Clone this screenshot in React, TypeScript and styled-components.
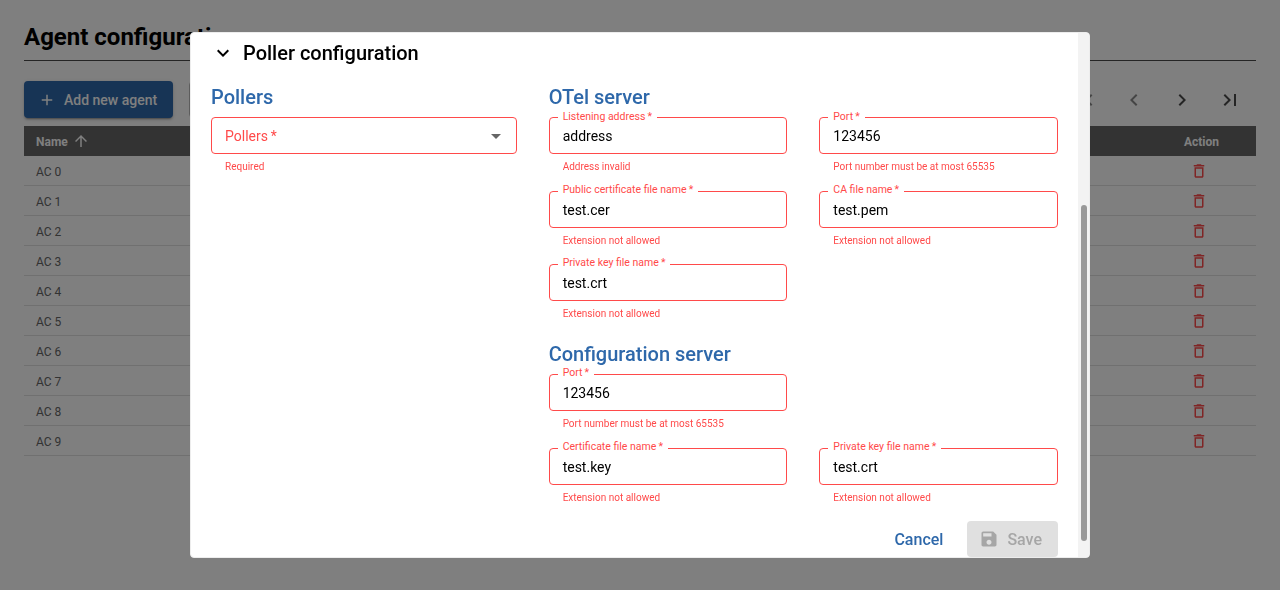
import React from "react";
import styled, { createGlobalStyle } from "styled-components";

const GlobalStyle = createGlobalStyle`
  * { box-sizing: border-box; }
  body { margin: 0; background: #fff; font-family: Roboto, "Liberation Sans", sans-serif; color: #000; }
  h1, h2, h3, p { margin: 0; }
`;

const paths = {
  add: "M19 13h-6v6h-2v-6H5v-2h6V5h2v6h6z",
  arrowUp: "m4 12 1.41 1.41L11 7.83V20h2V7.83l5.58 5.59L20 12l-8-8z",
  first: "M18.41 16.59 13.82 12l4.59-4.59L17 6l-6 6 6 6zM6 6h2v12H6z",
  left: "M15.41 7.41 14 6l-6 6 6 6 1.41-1.41L10.83 12z",
  right: "M10 6 8.59 7.41 13.17 12l-4.58 4.59L10 18l6-6z",
  last: "M5.59 7.41 10.18 12l-4.59 4.59L7 18l6-6-6-6zM16 6h2v12h-2z",
  expand: "M16.59 8.59 12 13.17 7.41 8.59 6 10l6 6 6-6z",
  dropdown: "m7 10 5 5 5-5z",
  trash:
    "M6 19c0 1.1.9 2 2 2h8c1.1 0 2-.9 2-2V7H6zM8 9h8v10H8zm7.5-5-1-1h-5l-1 1H5v2h14V4z",
  save: "M17 3H5c-1.11 0-2 .9-2 2v14c0 1.1.89 2 2 2h14c1.1 0 2-.9 2-2V7zm-5 16c-1.66 0-3-1.34-3-3s1.34-3 3-3 3 1.34 3 3-1.34 3-3 3m3-10H5V5h10z",
};

const Svg = styled.svg`
  display: block;
  flex: none;
  fill: currentColor;
`;

const Icon = ({ name, size = 24 }: { name: keyof typeof paths; size?: number }) => (
  <Svg width={size} height={size} viewBox="0 0 24 24" aria-hidden="true">
    <path d={paths[name]} />
  </Svg>
);

const Page = styled.main`
  height: 590px;
  padding: 14px 24px 0;
  overflow: hidden;
`;

const PageTitle = styled.h1`
  height: 47px;
  border-bottom: 1px solid #4a4a4a;
  font-size: 24px;
  font-weight: 700;
  line-height: 46px;
`;

const Toolbar = styled.div`
  display: flex;
  align-items: center;
  height: 65px;
  padding-top: 12px;
`;

const AddButton = styled.button`
  display: flex;
  align-items: center;
  gap: 8px;
  width: 149px;
  height: 37px;
  padding: 0 0 0 14px;
  border: 0;
  border-radius: 4px;
  background: #2e68aa;
  color: #fff;
  font: 500 14px Roboto, sans-serif;
  white-space: nowrap;
  box-shadow: 0 3px 1px -2px rgba(0, 0, 0, 0.2), 0 2px 2px rgba(0, 0, 0, 0.14),
    0 1px 5px rgba(0, 0, 0, 0.12);
`;

const Search = styled.div`
  width: 250px;
  height: 37px;
  margin-left: 16px;
  border: 1px solid #b8b8b8;
  border-radius: 4px;
`;

const Pagination = styled.div`
  display: flex;
  gap: 24px;
  margin-left: auto;
  padding-right: 14px;
`;

const PageStep = styled.span<{ $disabled?: boolean }>`
  color: ${(p) => (p.$disabled ? "#8a8a8a" : "#4a4a4a")};
`;

const TableRow = styled.div<{ $head?: boolean }>`
  display: flex;
  align-items: center;
  justify-content: space-between;
  height: 30px;
  padding: ${(p) => (p.$head ? "0 37px 0 12px" : "0 48px 0 12px")};
  background: ${(p) => (p.$head ? "#666" : "#fff")};
  color: ${(p) => (p.$head ? "#fff" : "#666")};
  border-bottom: ${(p) => (p.$head ? "0" : "1px solid #e0e0e0")};
  font-size: 12px;
  font-weight: ${(p) => (p.$head ? 700 : 400)};
`;

const CellText = styled.span`
  padding-top: 2px;
`;

const SortCell = styled.span`
  display: flex;
  align-items: center;
  gap: 4px;
`;

const Danger = styled.span`
  color: #ff4a4a;
`;

const Backdrop = styled.div`
  position: fixed;
  inset: 0;
  display: flex;
  justify-content: center;
  align-items: center;
  background: rgba(0, 0, 0, 0.5);
`;

const Dialog = styled.div`
  display: flex;
  width: 900px;
  height: 526px;
  border: 1px solid #ededed;
  border-radius: 4px;
  background: #fff;
  overflow: hidden;
`;

const DialogBody = styled.div`
  flex: 1;
  padding: 8px 20px 0;
`;

const ScrollTrack = styled.div`
  width: 11px;
  padding: 172px 2px 0 3px;
  background: #f3f3f3;
`;

const ScrollThumb = styled.div`
  width: 6px;
  height: 336px;
  border-radius: 3px;
  background: #999;
`;

const SectionToggle = styled.div`
  display: flex;
  align-items: center;
  gap: 8px;
  height: 24px;
  margin-bottom: 16px;
`;

const SectionTitle = styled.h2`
  font-size: 20px;
  font-weight: 500;
  line-height: 24px;
`;

const Columns = styled.div`
  display: grid;
  grid-template-columns: 3fr 5fr;
  column-gap: 32px;
`;

const GroupTitle = styled.h3`
  height: 36.45px;
  color: #2e68aa;
  font-size: 20px;
  font-weight: 500;
  line-height: 32px;
`;

const FieldGrid = styled.div`
  display: grid;
  grid-template-columns: 1fr 1fr;
  grid-auto-rows: 73.45px;
  column-gap: 32px;
`;

const FieldBox = styled.div`
  position: relative;
  display: flex;
  align-items: center;
  justify-content: space-between;
  height: 37px;
  padding: 0.8px 8px 0 13px;
  border: 1px solid #ff4a4a;
  border-radius: 4px;
  font-size: 14px;
`;

const FloatingLabel = styled.label`
  position: absolute;
  top: -9.9px;
  left: 8px;
  padding: 0 5px;
  background: #fff;
  color: #ff4a4a;
  font-size: 10.5px;
  line-height: 15px;
  white-space: nowrap;
`;

const Placeholder = styled.span`
  color: #ff4a4a;
`;

const Caret = styled.span`
  color: #666;
`;

const Helper = styled.p`
  margin: 4px 14px 0;
  color: #ff4a4a;
  font-size: 10px;
  line-height: 17px;
  white-space: nowrap;
`;

const Footer = styled.div`
  display: flex;
  justify-content: flex-end;
  gap: 24px;
`;

const TextButton = styled.button`
  height: 36px;
  padding: 0;
  border: 0;
  background: none;
  color: #2e68aa;
  font: 500 16px Roboto, sans-serif;
`;

const SaveButton = styled(TextButton)`
  display: flex;
  align-items: center;
  gap: 8px;
  width: 90.6px;
  padding-left: 12px;
  border-radius: 4px;
  background: #e0e0e0;
  color: #a6a6a6;
`;

interface FieldProps {
  label: string;
  value: string;
  error: string;
}

const Field = ({ label, value, error }: FieldProps) => (
  <div>
    <FieldBox>
      <FloatingLabel>{label}{"\u2009*"}</FloatingLabel>
      <span>{value}</span>
    </FieldBox>
    <Helper>{error}</Helper>
  </div>
);

const portError = "Port number must be at most 65535";
const extError = "Extension not allowed";

export default function App() {
  return (
    <>
      <GlobalStyle />
      <Page>
        <PageTitle>Agent configurations</PageTitle>
        <Toolbar>
          <AddButton>
            <Icon name="add" size={18} />
            Add new agent
          </AddButton>
          <Search />
          <Pagination>
            <PageStep $disabled><Icon name="first" /></PageStep>
            <PageStep $disabled><Icon name="left" /></PageStep>
            <PageStep><Icon name="right" /></PageStep>
            <PageStep><Icon name="last" /></PageStep>
          </Pagination>
        </Toolbar>
        <TableRow $head>
          <SortCell>
            <CellText>Name</CellText>
            <Icon name="arrowUp" size={18} />
          </SortCell>
          <CellText>Action</CellText>
        </TableRow>
        {Array.from({ length: 10 }, (_, i) => (
          <TableRow key={i}>
            <CellText>AC {i}</CellText>
            <Danger><Icon name="trash" size={18} /></Danger>
          </TableRow>
        ))}
      </Page>
      <Backdrop>
        <Dialog role="dialog">
          <DialogBody>
            <SectionToggle>
              <Icon name="expand" />
              <SectionTitle>Poller configuration</SectionTitle>
            </SectionToggle>
            <Columns>
              <div>
                <GroupTitle>Pollers</GroupTitle>
                <FieldBox>
                  <Placeholder>Pollers{"\u2009*"}</Placeholder>
                  <Caret><Icon name="dropdown" /></Caret>
                </FieldBox>
                <Helper>Required</Helper>
              </div>
              <div>
                <GroupTitle>OTel server</GroupTitle>
                <FieldGrid>
                  <Field label="Listening address" value="address" error="Address invalid" />
                  <Field label="Port" value="123456" error={portError} />
                  <Field label="Public certificate file name" value="test.cer" error={extError} />
                  <Field label="CA file name" value="test.pem" error={extError} />
                  <Field label="Private key file name" value="test.crt" error={extError} />
                </FieldGrid>
                <GroupTitle>Configuration server</GroupTitle>
                <FieldGrid>
                  <Field label="Port" value="123456" error={portError} />
                  <span />
                  <Field label="Certificate file name" value="test.key" error={extError} />
                  <Field label="Private key file name" value="test.crt" error={extError} />
                </FieldGrid>
              </div>
            </Columns>
            <Footer>
              <TextButton>Cancel</TextButton>
              <SaveButton disabled>
                <Icon name="save" size={20} />
                Save
              </SaveButton>
            </Footer>
          </DialogBody>
          <ScrollTrack>
            <ScrollThumb />
          </ScrollTrack>
        </Dialog>
      </Backdrop>
    </>
  );
}
